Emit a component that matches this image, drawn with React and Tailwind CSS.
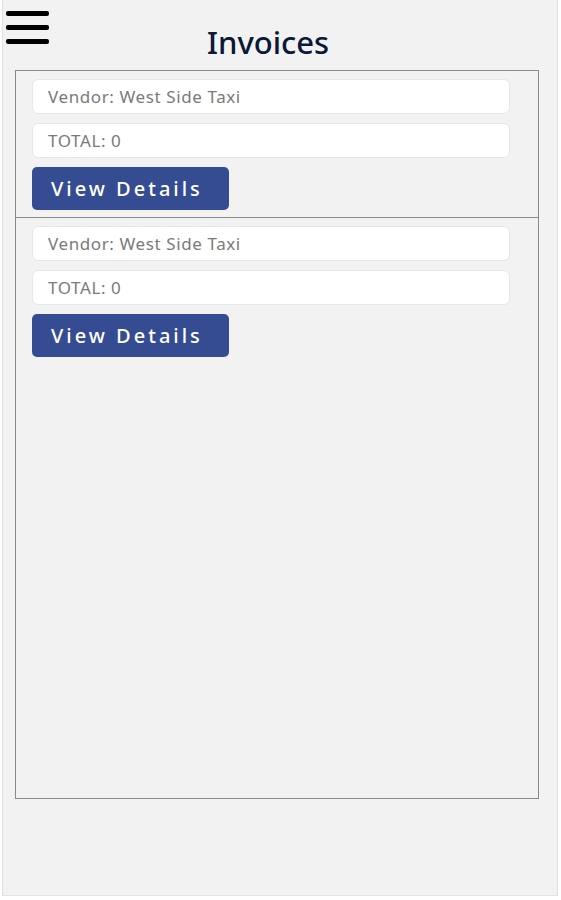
import React from 'react';

const invoices = [
  { id: 1, vendor: 'West Side Taxi', total: 0 },
  { id: 2, vendor: 'West Side Taxi', total: 0 },
];

function MenuIcon() {
  return (
    <div className="flex w-[43px] flex-col gap-[9px] pt-[11px]">
      <span className="block h-[5px] rounded-[2px] bg-black" />
      <span className="block h-[5px] rounded-[2px] bg-black" />
      <span className="block h-[5px] rounded-[2px] bg-black" />
    </div>
  );
}

function InvoiceCard({ invoice, last }) {
  return (
    <div className={`flex flex-col px-[16px] pt-[8px] pb-[7px] ${last ? '' : 'border-b border-[#8a8a8a]'}`}>
      <div className="flex h-[35px] w-[478px] items-center rounded-[6px] border border-[#e6e6e6] bg-white px-[15px] text-[17px] tracking-[0.6px] text-[#7a7a7a]">
        Vendor: {invoice.vendor}
      </div>
      <div className="mt-[9px] flex h-[35px] w-[478px] items-center rounded-[6px] border border-[#e6e6e6] bg-white px-[15px] text-[17px] tracking-[0.6px] text-[#7a7a7a]">
        TOTAL: {invoice.total}
      </div>
      <button
        type="button"
        className="mt-[9px] h-[43px] w-[197px] rounded-[5px] bg-[#354c93] text-left pl-[19px] text-[20px] font-medium tracking-[3px] text-white"
      >
        View Details
      </button>
    </div>
  );
}

export default function App() {
  return (
    <div className="h-[900px] w-[561px] bg-white pl-[2px] pr-[3px] pb-[4px]" style={{ fontFamily: '"Noto Sans", "Open Sans", sans-serif' }}>
      <div className="flex h-full flex-col border-x border-b border-[#e2e2e2] bg-[#f2f2f2]">
        <div className="flex h-[70px] items-start pl-[3px]">
          <MenuIcon />
          <h1 className="ml-[158px] mt-[22px] text-[31px] leading-[40px] font-medium text-[#0b1836]">Invoices</h1>
        </div>
        <div className="ml-[12px] h-[729px] w-[524px] border border-[#8a8a8a]">
          {invoices.map((invoice, i) => (
            <InvoiceCard key={invoice.id} invoice={invoice} last={i === invoices.length - 1} />
          ))}
        </div>
      </div>
    </div>
  );
}
